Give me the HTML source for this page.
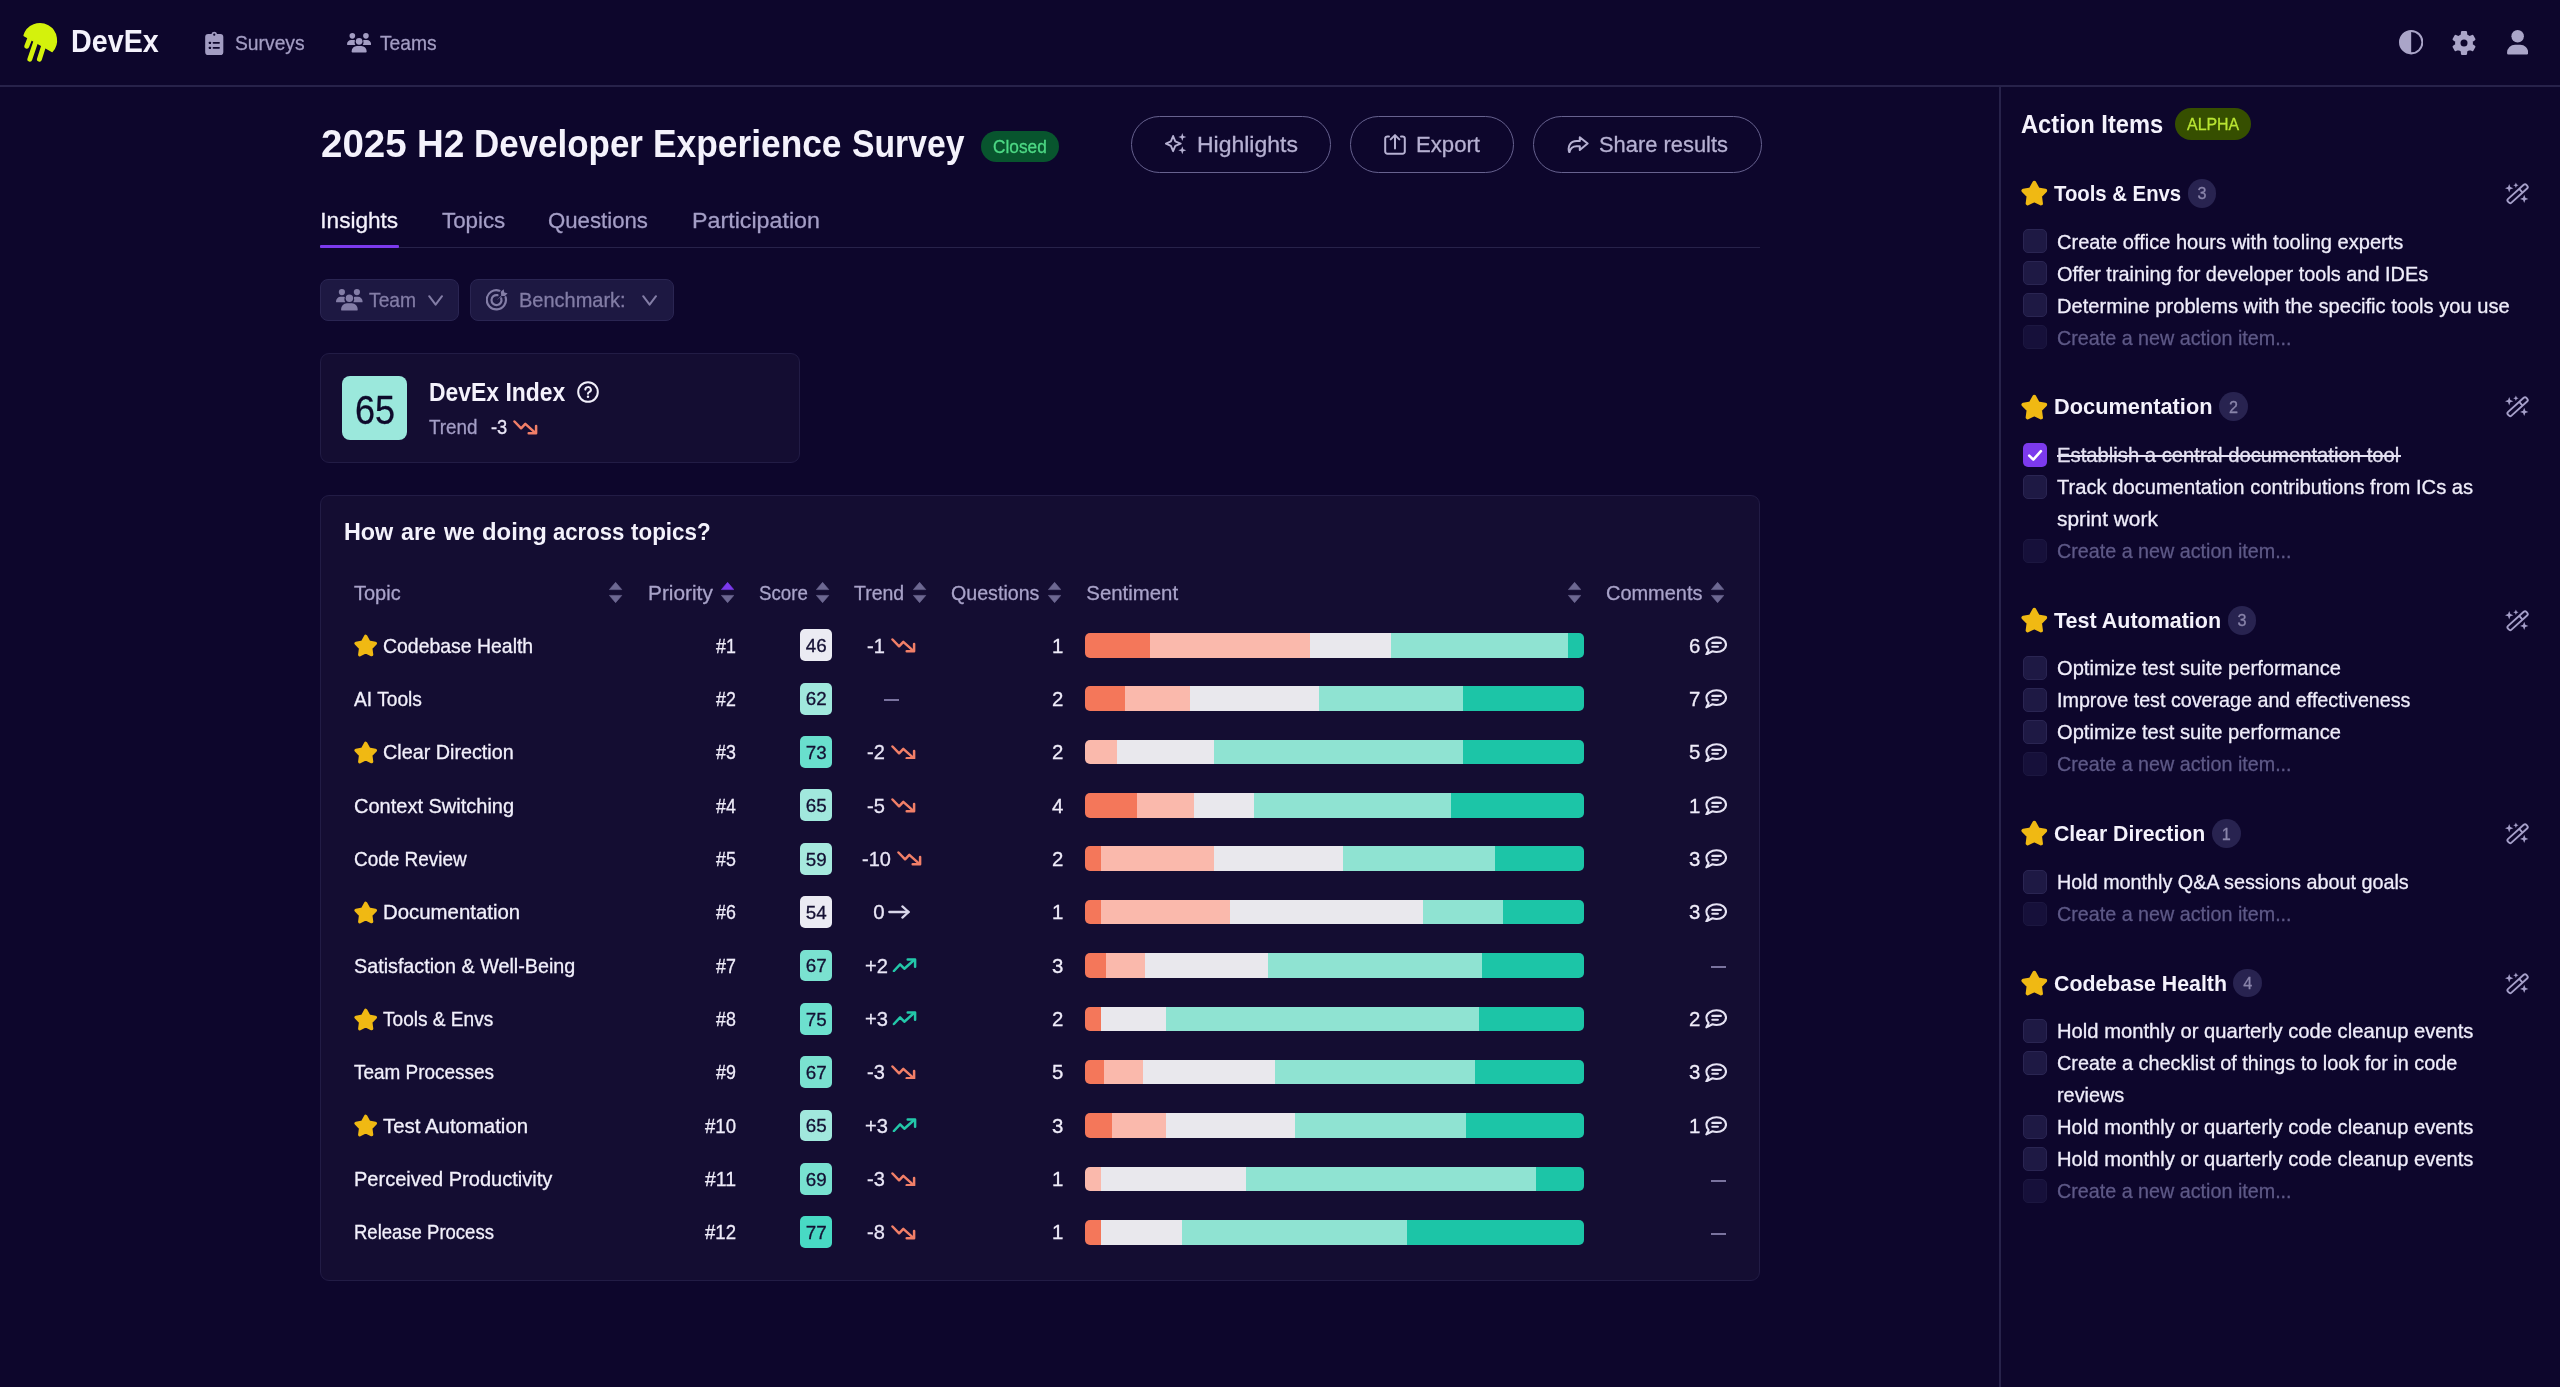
<!DOCTYPE html>
<html lang="en"><head><meta charset="utf-8"><title>DevEx - 2025 H2 Developer Experience Survey</title>
<style>
html,body{margin:0;padding:0}
body{width:2560px;height:1387px;overflow:hidden;background:#0d062c;position:relative;font-family:"Liberation Sans",sans-serif;-webkit-font-smoothing:antialiased}
.t{position:absolute;white-space:pre;display:block;transform-origin:0 0}
.b{position:absolute;display:block}
#app{position:absolute;left:0;top:0;width:2560px;height:1387px;will-change:transform}
.bar{border-radius:5px;overflow:hidden}
.bar i{position:absolute;top:0;height:100%;display:block}
</style></head>
<body>
<div id="app">
<svg class="b" style="left:0.00px;top:0.00px;" width="80.00" height="80.00" viewBox="0 0 80 80"><path fill="#d4f20c" stroke="#d4f20c" stroke-width="1.6" stroke-linejoin="round" d="M24.2 35.6 A16.4 16.4 0 1 1 52.0 51.4 Z"/><g stroke="#d4f20c" stroke-width="4.9" stroke-linecap="round"><line x1="29.6" y1="39" x2="26.8" y2="46.2"/><line x1="35.5" y1="42.5" x2="29.8" y2="59.2"/><line x1="43.3" y1="47" x2="39.4" y2="59.2"/></g></svg>
<span class="t" style="left:71.00px;top:26.44px;font-size:31.50px;line-height:31.50px;color:#f4f2fc;font-weight:700;transform:scaleX(0.9109);">DevEx</span>
<svg class="b" style="left:205.00px;top:30.60px;" width="18.50" height="24.20" viewBox="0 0 18 24"><path fill="#a39dc3" d="M3 3h3.2a2.9 2.9 0 0 1 5.6 0H15a3 3 0 0 1 3 3v15a3 3 0 0 1-3 3H3a3 3 0 0 1-3-3V6a3 3 0 0 1 3-3z"/><circle cx="9" cy="3.6" r="1.1" fill="#0d062c"/><g fill="#0d062c"><rect x="3.6" y="10.6" width="2.2" height="2.2" rx=".5"/><rect x="7.4" y="10.9" width="7.2" height="1.7" rx=".8"/><rect x="3.6" y="15.6" width="2.2" height="2.2" rx=".5"/><rect x="7.4" y="15.9" width="7.2" height="1.7" rx=".8"/></g></svg>
<span class="t" style="left:234.80px;top:32.56px;font-size:20.60px;line-height:20.60px;color:#a39dc3;-webkit-text-stroke:0.3px;transform:scaleX(0.9359);">Surveys</span>
<svg class="b" style="left:347.20px;top:33.10px;" width="24.10" height="19.60" viewBox="0 0 26.6 21.6"><g fill="#a39dc3"><circle cx="5.900" cy="3.100" r="3.100"/><circle cx="20.900" cy="3.100" r="3.100"/><path d="M0 12.400a4.600 4.600 0 0 1 4.600-4.600h2.400c.700 0 1.300.150 1.900.400a5.300 5.300 0 0 0 .300 4.900c0 .100-.300.200-.500.200H.800a.800.800 0 0 1-.800-.900z"/><path d="M26.600 12.400a4.600 4.600 0 0 0-4.600-4.600h-2.400c-.700 0-1.300.150-1.900.400a5.300 5.300 0 0 1-.300 4.900c0 .100.300.200.500.200h7.900a.800.800 0 0 0 .800-.900z"/><path stroke="#0d062c" stroke-width="1.1" paint-order="stroke" d="M5.100 20.700v-.600a5.800 5.800 0 0 1 5.800-5.800h5.000a5.800 5.800 0 0 1 5.800 5.800v.600a.900.900 0 0 1-.900.900H6.000a.900.900 0 0 1-.900-.900z"/><circle cx="13.400" cy="9.200" r="3.700" stroke="#0d062c" stroke-width="1.1" paint-order="stroke"/></g></svg>
<span class="t" style="left:379.80px;top:32.56px;font-size:20.60px;line-height:20.60px;color:#a39dc3;-webkit-text-stroke:0.3px;transform:scaleX(0.9346);">Teams</span>
<svg class="b" style="left:2398.80px;top:30.40px;" width="24.40" height="24.40" viewBox="0 0 24 24"><circle cx="12" cy="12" r="11" fill="none" stroke="#aaa5c8" stroke-width="2"/><path fill="#aaa5c8" d="M12 1a11 11 0 0 0 0 22z"/></svg>
<svg class="b" style="left:2451.90px;top:30.70px;" width="24.00" height="24.00" viewBox="0 0 24 24"><path fill="#aaa5c8" stroke="#aaa5c8" stroke-width="2.2" stroke-linejoin="round" d="M10.05 1.17 L13.95 1.17 L14.23 4.32 L17.54 6.23 L20.40 4.90 L22.35 8.27 L19.77 10.09 L19.77 13.91 L22.35 15.73 L20.40 19.10 L17.54 17.77 L14.23 19.68 L13.95 22.83 L10.05 22.83 L9.77 19.68 L6.46 17.77 L3.60 19.10 L1.65 15.73 L4.23 13.91 L4.23 10.09 L1.65 8.27 L3.60 4.90 L6.46 6.23 L9.77 4.32Z"/><circle cx="12" cy="12" r="3.5" fill="#0d062c"/></svg>
<svg class="b" style="left:2506.60px;top:30.40px;" width="21.30" height="24.50" viewBox="0 0 21 24.3"><g fill="#aaa5c8"><circle cx="10.5" cy="6.2" r="6.2"/><path d="M0 22.6a8 8 0 0 1 8-8h5a8 8 0 0 1 8 8v.4a1.3 1.3 0 0 1-1.3 1.3H1.3A1.3 1.3 0 0 1 0 23z"/></g></svg>
<div class="b" style="left:0.00px;top:85.30px;width:2560.00px;height:2.00px;background:#27224a;"></div>
<div class="b" style="left:1998.90px;top:86.00px;width:2.00px;height:1301.00px;background:#27224a;"></div>
<span class="t" style="left:320.60px;top:123.65px;font-size:39.40px;line-height:39.40px;color:#f4f2fc;font-weight:700;transform:scaleX(0.9776);">2025</span>
<span class="t" style="left:417.40px;top:123.65px;font-size:39.40px;line-height:39.40px;color:#f4f2fc;font-weight:700;transform:scaleX(0.9399);">H2</span>
<span class="t" style="left:473.60px;top:123.65px;font-size:39.40px;line-height:39.40px;color:#f4f2fc;font-weight:700;transform:scaleX(0.8871);">Developer</span>
<span class="t" style="left:653.30px;top:123.65px;font-size:39.40px;line-height:39.40px;color:#f4f2fc;font-weight:700;transform:scaleX(0.8968);">Experience</span>
<span class="t" style="left:851.60px;top:123.65px;font-size:39.40px;line-height:39.40px;color:#f4f2fc;font-weight:700;transform:scaleX(0.8554);">Survey</span>
<div class="b" style="left:981.00px;top:130.50px;width:77.80px;height:31.80px;background:#08552e;border-radius:16px;"></div>
<span class="t" style="left:993.20px;top:138.70px;font-size:17.60px;line-height:17.60px;color:#4dd985;-webkit-text-stroke:0.3px;transform:scaleX(0.9813);">Closed</span>
<div class="b" style="left:1131.00px;top:116.00px;width:200.00px;height:56.60px;border-radius:28.3px;border:1.5px solid #67628f;box-sizing:border-box;"></div>
<div class="b" style="left:1350.00px;top:116.00px;width:164.30px;height:56.60px;border-radius:28.3px;border:1.5px solid #67628f;box-sizing:border-box;"></div>
<div class="b" style="left:1533.00px;top:116.00px;width:228.50px;height:56.60px;border-radius:28.3px;border:1.5px solid #67628f;box-sizing:border-box;"></div>
<svg class="b" style="left:1165.40px;top:133.40px;" width="22.40" height="21.40" viewBox="0 0 22.4 21.4"><path fill="none" stroke="#b6b1d2" stroke-width="1.9" stroke-linejoin="round" d="M8.1 3.0 L10.3 8.4 L15.7 10.600 L10.300 12.800 L8.100 18.200 L5.900 12.800 L0.900 10.600 L5.900 8.400Z"/><path fill="#b6b1d2" d="M17.30 0.00 L18.32 2.98 L21.30 4.00 L18.32 5.02 L17.30 8.00 L16.28 5.02 L13.30 4.00 L16.28 2.98Z"/><path fill="#b6b1d2" d="M17.30 13.30 L18.32 16.28 L21.30 17.30 L18.32 18.32 L17.30 21.30 L16.28 18.32 L13.30 17.30 L16.28 16.28Z"/></svg>
<span class="t" style="left:1197.10px;top:134.14px;font-size:22.40px;line-height:22.40px;color:#b6b1d2;-webkit-text-stroke:0.3px;transform:scaleX(1.0261);">Highlights</span>
<svg class="b" style="left:1384.40px;top:134.00px;" width="22.00" height="21.00" viewBox="0 0 22 21"><g fill="none" stroke="#b6b1d2" stroke-width="2" stroke-linecap="round" stroke-linejoin="round"><path d="M5.000 2.400H3.400a2.200 2.200 0 0 0-2.200 2.200v13a2.200 2.200 0 0 0 2.200 2.200h15.200a2.200 2.200 0 0 0 2.200-2.200V4.600a2.200 2.200 0 0 0-2.200-2.200h-1.600"/><path d="M11 14.400V1.200M6.700 5.400l4.300-4.300 4.300 4.300"/></g></svg>
<span class="t" style="left:1416.20px;top:134.14px;font-size:22.40px;line-height:22.40px;color:#b6b1d2;-webkit-text-stroke:0.3px;transform:scaleX(0.9886);">Export</span>
<svg class="b" style="left:1566.80px;top:135.60px;" width="22.00" height="17.60" viewBox="0 0 22 17.6"><path fill="none" stroke="#b6b1d2" stroke-width="2" stroke-linecap="round" stroke-linejoin="round" d="M12.800 1.200 L20.600 7.600 L12.800 14.000 V10.300 H9.600 C5.800 10.300 3.300 12.300 2.400 16.400 C0.200 11.000 3.000 5.000 9.800 5.000 H12.800Z"/></svg>
<span class="t" style="left:1599.00px;top:134.14px;font-size:22.40px;line-height:22.40px;color:#b6b1d2;-webkit-text-stroke:0.3px;transform:scaleX(0.9777);">Share results</span>
<span class="t" style="left:320.30px;top:209.97px;font-size:22.60px;line-height:22.60px;color:#f4f2fc;-webkit-text-stroke:0.3px;">Insights</span>
<span class="t" style="left:442.00px;top:209.97px;font-size:22.60px;line-height:22.60px;color:#a49ec6;-webkit-text-stroke:0.3px;transform:scaleX(0.9880);">Topics</span>
<span class="t" style="left:548.30px;top:209.97px;font-size:22.60px;line-height:22.60px;color:#a49ec6;-webkit-text-stroke:0.3px;transform:scaleX(0.9822);">Questions</span>
<span class="t" style="left:692.00px;top:209.97px;font-size:22.60px;line-height:22.60px;color:#a49ec6;-webkit-text-stroke:0.3px;transform:scaleX(1.0288);">Participation</span>
<div class="b" style="left:320.00px;top:246.80px;width:1440.00px;height:1.60px;background:#27224a;"></div>
<div class="b" style="left:320.00px;top:245.00px;width:79.00px;height:3.00px;background:#7c3aed;border-radius:1px;"></div>
<div class="b" style="left:320.00px;top:279.00px;width:139.40px;height:42.20px;background:#1d1842;border-radius:8px;border:1.4px solid #2a2552;box-sizing:border-box;"></div>
<div class="b" style="left:470.00px;top:279.00px;width:204.20px;height:42.20px;background:#1d1842;border-radius:8px;border:1.4px solid #2a2552;box-sizing:border-box;"></div>
<svg class="b" style="left:336.00px;top:289.20px;" width="26.60" height="21.60" viewBox="0 0 26.6 21.6"><g fill="#837da6"><circle cx="5.900" cy="3.100" r="3.100"/><circle cx="20.900" cy="3.100" r="3.100"/><path d="M0 12.400a4.600 4.600 0 0 1 4.600-4.600h2.400c.700 0 1.300.150 1.900.400a5.300 5.300 0 0 0 .300 4.900c0 .100-.300.200-.500.200H.800a.800.800 0 0 1-.800-.900z"/><path d="M26.600 12.400a4.600 4.600 0 0 0-4.600-4.600h-2.400c-.700 0-1.300.150-1.900.400a5.300 5.300 0 0 1-.300 4.900c0 .100.300.200.500.200h7.900a.800.800 0 0 0 .800-.900z"/><path stroke="#1d1842" stroke-width="1.1" paint-order="stroke" d="M5.100 20.700v-.600a5.800 5.800 0 0 1 5.800-5.800h5.000a5.800 5.800 0 0 1 5.800 5.800v.600a.900.900 0 0 1-.900.900H6.000a.900.900 0 0 1-.900-.900z"/><circle cx="13.400" cy="9.200" r="3.700" stroke="#1d1842" stroke-width="1.1" paint-order="stroke"/></g></svg>
<span class="t" style="left:368.90px;top:290.43px;font-size:20.40px;line-height:20.40px;color:#837da6;-webkit-text-stroke:0.3px;transform:scaleX(0.9443);">Team</span>
<svg class="b" style="left:428.40px;top:294.80px;" width="15.20" height="11.00" viewBox="0 0 15.2 11"><path fill="none" stroke="#837da6" stroke-width="2" stroke-linecap="round" stroke-linejoin="round" d="M1.2 1.2 L7.6 9.6 L14 1.2"/></svg>
<svg class="b" style="left:485.60px;top:289.30px;" width="22.00" height="21.40" viewBox="0 0 22 21.4"><g fill="none" stroke="#837da6" stroke-width="2.2" stroke-linecap="round"><path d="M19.6 8.2A9.6 9.6 0 1 1 13.400 1.700"/><path d="M15.200 9.400A5 5 0 1 1 11.500 6.200"/></g><path fill="#837da6" d="M10.6 11.2 L15.2 6.400 L14.800 2.800 L17.600 0.200 L18.300 3.600 L21.600 4.200 L19.000 7.000 L15.800 6.900Z"/></svg>
<span class="t" style="left:519.20px;top:290.43px;font-size:20.40px;line-height:20.40px;color:#837da6;-webkit-text-stroke:0.3px;transform:scaleX(0.9804);">Benchmark:</span>
<svg class="b" style="left:642.00px;top:294.80px;" width="15.20" height="11.00" viewBox="0 0 15.2 11"><path fill="none" stroke="#837da6" stroke-width="2" stroke-linecap="round" stroke-linejoin="round" d="M1.2 1.2 L7.6 9.6 L14 1.2"/></svg>
<div class="b" style="left:320.00px;top:353.00px;width:480.00px;height:109.60px;background:#140d32;border-radius:9px;border:1.5px solid #221c45;box-sizing:border-box;"></div>
<div class="b" style="left:342.20px;top:376.00px;width:64.70px;height:64.20px;background:#9be8dc;border-radius:8px;"></div>
<span class="t" style="left:355.00px;top:389.52px;font-size:40.50px;line-height:40.50px;color:#0e0a2b;-webkit-text-stroke:0.3px;transform:scaleX(0.8898);">65</span>
<span class="t" style="left:429.40px;top:379.84px;font-size:25.00px;line-height:25.00px;color:#f4f2fc;font-weight:700;transform:scaleX(0.9164);">DevEx Index</span>
<svg class="b" style="left:576.70px;top:381.00px;" width="22.00" height="22.00" viewBox="0 0 22 22"><circle cx="11" cy="11" r="9.8" fill="none" stroke="#f2f0fb" stroke-width="2"/><path fill="none" stroke="#f2f0fb" stroke-width="2" stroke-linecap="round" d="M8.300 8.600a2.800 2.600 0 1 1 3.900 2.500c-.8.400-1.200.900-1.200 1.700"/><circle cx="11" cy="15.700" r="1.250" fill="#f2f0fb"/></svg>
<span class="t" style="left:429.40px;top:416.73px;font-size:20.40px;line-height:20.40px;color:#a49ec6;-webkit-text-stroke:0.3px;transform:scaleX(0.9252);">Trend</span>
<span class="t" style="left:490.60px;top:416.73px;font-size:20.40px;line-height:20.40px;color:#e9e6f6;-webkit-text-stroke:0.3px;transform:scaleX(0.8978);">-3</span>
<svg class="b" style="left:512.60px;top:420.40px;" width="25.00" height="14.60" viewBox="0 0 24 14.6"><g fill="none" stroke="#f17f68" stroke-width="2.5" stroke-linecap="round" stroke-linejoin="round"><path d="M1.0 1.5 L7.6 8.3 L11.8 3.9 L21.6 12.6"/><path d="M15.2 13.2 H22.6 V5.9"/></g></svg>
<div class="b" style="left:320.00px;top:495.00px;width:1440.00px;height:786.20px;background:#140d32;border-radius:9px;border:1.5px solid #221c45;box-sizing:border-box;"></div>
<span class="t" style="left:343.50px;top:520.11px;font-size:24.20px;line-height:24.20px;color:#f4f2fc;font-weight:700;transform:scaleX(0.9652);">How</span>
<span class="t" style="left:400.60px;top:520.11px;font-size:24.20px;line-height:24.20px;color:#f4f2fc;font-weight:700;transform:scaleX(0.9614);">are</span>
<span class="t" style="left:443.52px;top:520.11px;font-size:24.20px;line-height:24.20px;color:#f4f2fc;font-weight:700;transform:scaleX(0.9560);">we</span>
<span class="t" style="left:481.60px;top:520.11px;font-size:24.20px;line-height:24.20px;color:#f4f2fc;font-weight:700;transform:scaleX(0.9860);">doing</span>
<span class="t" style="left:553.00px;top:520.11px;font-size:24.20px;line-height:24.20px;color:#f4f2fc;font-weight:700;transform:scaleX(0.9149);">across</span>
<span class="t" style="left:631.30px;top:520.11px;font-size:24.20px;line-height:24.20px;color:#f4f2fc;font-weight:700;transform:scaleX(0.9264);">topics?</span>
<span class="t" style="left:354.40px;top:582.63px;font-size:20.40px;line-height:20.40px;color:#a9a3c9;-webkit-text-stroke:0.3px;transform:scaleX(0.9804);">Topic</span>
<span class="t" style="left:647.50px;top:582.63px;font-size:20.40px;line-height:20.40px;color:#a9a3c9;-webkit-text-stroke:0.3px;transform:scaleX(1.0214);">Priority</span>
<span class="t" style="left:758.60px;top:582.63px;font-size:20.40px;line-height:20.40px;color:#a9a3c9;-webkit-text-stroke:0.3px;transform:scaleX(0.9165);">Score</span>
<span class="t" style="left:853.90px;top:582.63px;font-size:20.40px;line-height:20.40px;color:#a9a3c9;-webkit-text-stroke:0.3px;transform:scaleX(0.9556);">Trend</span>
<span class="t" style="left:951.00px;top:582.63px;font-size:20.40px;line-height:20.40px;color:#a9a3c9;-webkit-text-stroke:0.3px;transform:scaleX(0.9630);">Questions</span>
<span class="t" style="left:1086.30px;top:582.63px;font-size:20.40px;line-height:20.40px;color:#a9a3c9;-webkit-text-stroke:0.3px;">Sentiment</span>
<span class="t" style="left:1605.80px;top:582.63px;font-size:20.40px;line-height:20.40px;color:#a9a3c9;-webkit-text-stroke:0.3px;transform:scaleX(0.9784);">Comments</span>
<svg class="b" style="left:609.40px;top:581.80px;" width="13.20" height="21.00" viewBox="0 0 13.2 21"><path fill="#6d6892" d="M6.6 0.3 L12.8 7.6 H0.4Z" stroke="#6d6892" stroke-width=".6" stroke-linejoin="round"/><path fill="#6d6892" d="M6.6 20.7 L12.8 13.4 H0.4Z" stroke="#6d6892" stroke-width=".6" stroke-linejoin="round"/></svg>
<svg class="b" style="left:721.20px;top:581.80px;" width="13.20" height="21.00" viewBox="0 0 13.2 21"><path fill="#7c3aed" d="M6.6 0.3 L12.8 7.6 H0.4Z" stroke="#7c3aed" stroke-width=".6" stroke-linejoin="round"/><path fill="#6d6892" d="M6.6 20.7 L12.8 13.4 H0.4Z" stroke="#6d6892" stroke-width=".6" stroke-linejoin="round"/></svg>
<svg class="b" style="left:816.40px;top:581.80px;" width="13.20" height="21.00" viewBox="0 0 13.2 21"><path fill="#6d6892" d="M6.6 0.3 L12.8 7.6 H0.4Z" stroke="#6d6892" stroke-width=".6" stroke-linejoin="round"/><path fill="#6d6892" d="M6.6 20.7 L12.8 13.4 H0.4Z" stroke="#6d6892" stroke-width=".6" stroke-linejoin="round"/></svg>
<svg class="b" style="left:913.40px;top:581.80px;" width="13.20" height="21.00" viewBox="0 0 13.2 21"><path fill="#6d6892" d="M6.6 0.3 L12.8 7.6 H0.4Z" stroke="#6d6892" stroke-width=".6" stroke-linejoin="round"/><path fill="#6d6892" d="M6.6 20.7 L12.8 13.4 H0.4Z" stroke="#6d6892" stroke-width=".6" stroke-linejoin="round"/></svg>
<svg class="b" style="left:1047.90px;top:581.80px;" width="13.20" height="21.00" viewBox="0 0 13.2 21"><path fill="#6d6892" d="M6.6 0.3 L12.8 7.6 H0.4Z" stroke="#6d6892" stroke-width=".6" stroke-linejoin="round"/><path fill="#6d6892" d="M6.6 20.7 L12.8 13.4 H0.4Z" stroke="#6d6892" stroke-width=".6" stroke-linejoin="round"/></svg>
<svg class="b" style="left:1568.00px;top:581.80px;" width="13.20" height="21.00" viewBox="0 0 13.2 21"><path fill="#6d6892" d="M6.6 0.3 L12.8 7.6 H0.4Z" stroke="#6d6892" stroke-width=".6" stroke-linejoin="round"/><path fill="#6d6892" d="M6.6 20.7 L12.8 13.4 H0.4Z" stroke="#6d6892" stroke-width=".6" stroke-linejoin="round"/></svg>
<svg class="b" style="left:1710.90px;top:581.80px;" width="13.20" height="21.00" viewBox="0 0 13.2 21"><path fill="#6d6892" d="M6.6 0.3 L12.8 7.6 H0.4Z" stroke="#6d6892" stroke-width=".6" stroke-linejoin="round"/><path fill="#6d6892" d="M6.6 20.7 L12.8 13.4 H0.4Z" stroke="#6d6892" stroke-width=".6" stroke-linejoin="round"/></svg>
<svg class="b" style="left:353.60px;top:634.20px;" width="23.40" height="23.40" viewBox="0 0 24 24"><path d="M12.00 2.40 L15.23 8.35 L21.89 9.59 L17.23 14.50 L18.11 21.21 L12.00 18.30 L5.89 21.21 L6.77 14.50 L2.11 9.59 L8.77 8.35Z" fill="#f0b913" stroke="#f0b913" stroke-width="3.4" stroke-linejoin="round"/></svg>
<span class="t" style="left:383.00px;top:635.53px;font-size:20.40px;line-height:20.40px;color:#f2f0fb;-webkit-text-stroke:0.3px;transform:scaleX(0.9531);">Codebase Health</span>
<span class="t" style="left:716.20px;top:635.53px;font-size:20.40px;line-height:20.40px;color:#efecf9;-webkit-text-stroke:0.3px;transform:scaleX(0.8744);">#1</span>
<div class="b" style="left:800.20px;top:629.40px;width:31.80px;height:31.80px;background:#ebebf3;border-radius:5px;"></div>
<span class="t" style="left:805.73px;top:637.09px;font-size:18.80px;line-height:18.80px;color:#141033;-webkit-text-stroke:0.3px;">46</span>
<span class="t" style="left:867.17px;top:635.53px;font-size:20.40px;line-height:20.40px;color:#e9e6f6;-webkit-text-stroke:0.3px;transform:scaleX(0.9835);">-1</span>
<svg class="b" style="left:891.23px;top:638.00px;" width="25.00" height="14.60" viewBox="0 0 24 14.6"><g fill="none" stroke="#f17f68" stroke-width="2.5" stroke-linecap="round" stroke-linejoin="round"><path d="M1.0 1.5 L7.6 8.3 L11.8 3.9 L21.6 12.6"/><path d="M15.2 13.2 H22.6 V5.9"/></g></svg>
<span class="t" style="left:1051.98px;top:635.53px;font-size:20.40px;line-height:20.40px;color:#efecf9;-webkit-text-stroke:0.3px;">1</span>
<div class="b bar" style="left:1085.4px;top:633.00px;width:498.6px;height:24.6px"><i style="left:0.0px;width:65.0px;background:#f4775a"></i><i style="left:64.6px;width:160.8px;background:#fab9ac"></i><i style="left:225.0px;width:80.6px;background:#e9e8ed"></i><i style="left:305.2px;width:177.8px;background:#8fe3d2"></i><i style="left:482.6px;width:16.4px;background:#1cc5a7"></i></div>
<span class="t" style="left:1688.88px;top:635.53px;font-size:20.40px;line-height:20.40px;color:#efecf9;-webkit-text-stroke:0.3px;">6</span>
<svg class="b" style="left:1704.60px;top:635.80px;" width="22.40" height="19.60" viewBox="0 0 22.4 19.6"><g fill="none" stroke="#e6e3f4" stroke-width="2.1" stroke-linecap="round" stroke-linejoin="round"><path d="M11.6 1.2c5.4 0 9.4 3.3 9.4 7.4s-4 7.4-9.4 7.4c-1.5 0-2.9-.3-4.100-.7L1.300 18.400l2.300-4.300C2.100 12.700 1.400 10.700 1.400 8.600 1.400 4.500 6.200 1.200 11.600 1.200z"/><path d="M7.300 6.900h8.600M7.300 10.700h5.600"/></g></svg>
<span class="t" style="left:354.20px;top:688.89px;font-size:20.40px;line-height:20.40px;color:#f2f0fb;-webkit-text-stroke:0.3px;transform:scaleX(0.9416);">AI Tools</span>
<span class="t" style="left:716.20px;top:688.89px;font-size:20.40px;line-height:20.40px;color:#efecf9;-webkit-text-stroke:0.3px;transform:scaleX(0.8744);">#2</span>
<div class="b" style="left:800.20px;top:682.76px;width:31.80px;height:31.80px;background:#a0e8dd;border-radius:5px;"></div>
<span class="t" style="left:805.73px;top:690.45px;font-size:18.80px;line-height:18.80px;color:#141033;-webkit-text-stroke:0.3px;">62</span>
<div class="b" style="left:884.00px;top:699.00px;width:15.40px;height:2.20px;background:#7a739f;"></div>
<span class="t" style="left:1051.98px;top:688.89px;font-size:20.40px;line-height:20.40px;color:#efecf9;-webkit-text-stroke:0.3px;">2</span>
<div class="b bar" style="left:1085.4px;top:686.36px;width:498.6px;height:24.6px"><i style="left:0.0px;width:40.0px;background:#f4775a"></i><i style="left:39.6px;width:65.0px;background:#fab9ac"></i><i style="left:104.2px;width:129.4px;background:#e9e8ed"></i><i style="left:233.2px;width:145.2px;background:#8fe3d2"></i><i style="left:378.0px;width:121.0px;background:#1cc5a7"></i></div>
<span class="t" style="left:1688.88px;top:688.89px;font-size:20.40px;line-height:20.40px;color:#efecf9;-webkit-text-stroke:0.3px;">7</span>
<svg class="b" style="left:1704.60px;top:689.16px;" width="22.40" height="19.60" viewBox="0 0 22.4 19.6"><g fill="none" stroke="#e6e3f4" stroke-width="2.1" stroke-linecap="round" stroke-linejoin="round"><path d="M11.6 1.2c5.4 0 9.4 3.3 9.4 7.4s-4 7.4-9.4 7.4c-1.5 0-2.9-.3-4.100-.7L1.300 18.400l2.300-4.300C2.100 12.700 1.400 10.700 1.400 8.600 1.400 4.500 6.200 1.200 11.600 1.200z"/><path d="M7.300 6.900h8.600M7.300 10.700h5.600"/></g></svg>
<svg class="b" style="left:353.60px;top:740.92px;" width="23.40" height="23.40" viewBox="0 0 24 24"><path d="M12.00 2.40 L15.23 8.35 L21.89 9.59 L17.23 14.50 L18.11 21.21 L12.00 18.30 L5.89 21.21 L6.77 14.50 L2.11 9.59 L8.77 8.35Z" fill="#f0b913" stroke="#f0b913" stroke-width="3.4" stroke-linejoin="round"/></svg>
<span class="t" style="left:383.00px;top:742.25px;font-size:20.40px;line-height:20.40px;color:#f2f0fb;-webkit-text-stroke:0.3px;transform:scaleX(0.9693);">Clear Direction</span>
<span class="t" style="left:716.20px;top:742.25px;font-size:20.40px;line-height:20.40px;color:#efecf9;-webkit-text-stroke:0.3px;transform:scaleX(0.8744);">#3</span>
<div class="b" style="left:800.20px;top:736.12px;width:31.80px;height:31.80px;background:#69dfcd;border-radius:5px;"></div>
<span class="t" style="left:805.73px;top:743.81px;font-size:18.80px;line-height:18.80px;color:#141033;-webkit-text-stroke:0.3px;">73</span>
<span class="t" style="left:867.17px;top:742.25px;font-size:20.40px;line-height:20.40px;color:#e9e6f6;-webkit-text-stroke:0.3px;transform:scaleX(0.9835);">-2</span>
<svg class="b" style="left:891.23px;top:744.72px;" width="25.00" height="14.60" viewBox="0 0 24 14.6"><g fill="none" stroke="#f17f68" stroke-width="2.5" stroke-linecap="round" stroke-linejoin="round"><path d="M1.0 1.5 L7.6 8.3 L11.8 3.9 L21.6 12.6"/><path d="M15.2 13.2 H22.6 V5.9"/></g></svg>
<span class="t" style="left:1051.98px;top:742.25px;font-size:20.40px;line-height:20.40px;color:#efecf9;-webkit-text-stroke:0.3px;">2</span>
<div class="b bar" style="left:1085.4px;top:739.72px;width:498.6px;height:24.6px"><i style="left:0.0px;width:32.4px;background:#fab9ac"></i><i style="left:32.0px;width:97.0px;background:#e9e8ed"></i><i style="left:128.6px;width:249.8px;background:#8fe3d2"></i><i style="left:378.0px;width:121.0px;background:#1cc5a7"></i></div>
<span class="t" style="left:1688.88px;top:742.25px;font-size:20.40px;line-height:20.40px;color:#efecf9;-webkit-text-stroke:0.3px;">5</span>
<svg class="b" style="left:1704.60px;top:742.52px;" width="22.40" height="19.60" viewBox="0 0 22.4 19.6"><g fill="none" stroke="#e6e3f4" stroke-width="2.1" stroke-linecap="round" stroke-linejoin="round"><path d="M11.6 1.2c5.4 0 9.4 3.3 9.4 7.4s-4 7.4-9.4 7.4c-1.5 0-2.9-.3-4.100-.7L1.300 18.400l2.300-4.300C2.100 12.700 1.400 10.700 1.400 8.600 1.400 4.500 6.200 1.200 11.600 1.200z"/><path d="M7.300 6.900h8.600M7.300 10.700h5.600"/></g></svg>
<span class="t" style="left:354.20px;top:795.61px;font-size:20.40px;line-height:20.40px;color:#f2f0fb;-webkit-text-stroke:0.3px;transform:scaleX(0.9810);">Context Switching</span>
<span class="t" style="left:716.20px;top:795.61px;font-size:20.40px;line-height:20.40px;color:#efecf9;-webkit-text-stroke:0.3px;transform:scaleX(0.8744);">#4</span>
<div class="b" style="left:800.20px;top:789.48px;width:31.80px;height:31.80px;background:#a1e8dd;border-radius:5px;"></div>
<span class="t" style="left:805.73px;top:797.17px;font-size:18.80px;line-height:18.80px;color:#141033;-webkit-text-stroke:0.3px;">65</span>
<span class="t" style="left:867.17px;top:795.61px;font-size:20.40px;line-height:20.40px;color:#e9e6f6;-webkit-text-stroke:0.3px;transform:scaleX(0.9835);">-5</span>
<svg class="b" style="left:891.23px;top:798.08px;" width="25.00" height="14.60" viewBox="0 0 24 14.6"><g fill="none" stroke="#f17f68" stroke-width="2.5" stroke-linecap="round" stroke-linejoin="round"><path d="M1.0 1.5 L7.6 8.3 L11.8 3.9 L21.6 12.6"/><path d="M15.2 13.2 H22.6 V5.9"/></g></svg>
<span class="t" style="left:1051.98px;top:795.61px;font-size:20.40px;line-height:20.40px;color:#efecf9;-webkit-text-stroke:0.3px;">4</span>
<div class="b bar" style="left:1085.4px;top:793.08px;width:498.6px;height:24.6px"><i style="left:0.0px;width:52.4px;background:#f4775a"></i><i style="left:52.0px;width:57.0px;background:#fab9ac"></i><i style="left:108.6px;width:60.4px;background:#e9e8ed"></i><i style="left:168.6px;width:197.8px;background:#8fe3d2"></i><i style="left:366.0px;width:133.0px;background:#1cc5a7"></i></div>
<span class="t" style="left:1688.88px;top:795.61px;font-size:20.40px;line-height:20.40px;color:#efecf9;-webkit-text-stroke:0.3px;">1</span>
<svg class="b" style="left:1704.60px;top:795.88px;" width="22.40" height="19.60" viewBox="0 0 22.4 19.6"><g fill="none" stroke="#e6e3f4" stroke-width="2.1" stroke-linecap="round" stroke-linejoin="round"><path d="M11.6 1.2c5.4 0 9.4 3.3 9.4 7.4s-4 7.4-9.4 7.4c-1.5 0-2.9-.3-4.100-.7L1.300 18.400l2.300-4.300C2.100 12.700 1.400 10.700 1.400 8.600 1.400 4.500 6.200 1.200 11.600 1.200z"/><path d="M7.300 6.900h8.600M7.300 10.700h5.600"/></g></svg>
<span class="t" style="left:354.20px;top:848.97px;font-size:20.40px;line-height:20.40px;color:#f2f0fb;-webkit-text-stroke:0.3px;transform:scaleX(0.9293);">Code Review</span>
<span class="t" style="left:716.20px;top:848.97px;font-size:20.40px;line-height:20.40px;color:#efecf9;-webkit-text-stroke:0.3px;transform:scaleX(0.8744);">#5</span>
<div class="b" style="left:800.20px;top:842.84px;width:31.80px;height:31.80px;background:#a6e9de;border-radius:5px;"></div>
<span class="t" style="left:805.73px;top:850.53px;font-size:18.80px;line-height:18.80px;color:#141033;-webkit-text-stroke:0.3px;">59</span>
<span class="t" style="left:861.66px;top:848.97px;font-size:20.40px;line-height:20.40px;color:#e9e6f6;-webkit-text-stroke:0.3px;transform:scaleX(0.9796);">-10</span>
<svg class="b" style="left:896.74px;top:851.44px;" width="25.00" height="14.60" viewBox="0 0 24 14.6"><g fill="none" stroke="#f17f68" stroke-width="2.5" stroke-linecap="round" stroke-linejoin="round"><path d="M1.0 1.5 L7.6 8.3 L11.8 3.9 L21.6 12.6"/><path d="M15.2 13.2 H22.6 V5.9"/></g></svg>
<span class="t" style="left:1051.98px;top:848.97px;font-size:20.40px;line-height:20.40px;color:#efecf9;-webkit-text-stroke:0.3px;">2</span>
<div class="b bar" style="left:1085.4px;top:846.44px;width:498.6px;height:24.6px"><i style="left:0.0px;width:16.0px;background:#f4775a"></i><i style="left:15.6px;width:113.4px;background:#fab9ac"></i><i style="left:128.6px;width:129.0px;background:#e9e8ed"></i><i style="left:257.2px;width:153.2px;background:#8fe3d2"></i><i style="left:410.0px;width:89.0px;background:#1cc5a7"></i></div>
<span class="t" style="left:1688.88px;top:848.97px;font-size:20.40px;line-height:20.40px;color:#efecf9;-webkit-text-stroke:0.3px;">3</span>
<svg class="b" style="left:1704.60px;top:849.24px;" width="22.40" height="19.60" viewBox="0 0 22.4 19.6"><g fill="none" stroke="#e6e3f4" stroke-width="2.1" stroke-linecap="round" stroke-linejoin="round"><path d="M11.6 1.2c5.4 0 9.4 3.3 9.4 7.4s-4 7.4-9.4 7.4c-1.5 0-2.9-.3-4.100-.7L1.300 18.400l2.300-4.300C2.100 12.700 1.400 10.700 1.400 8.600 1.400 4.500 6.200 1.200 11.600 1.200z"/><path d="M7.300 6.900h8.600M7.300 10.700h5.600"/></g></svg>
<svg class="b" style="left:353.60px;top:901.00px;" width="23.40" height="23.40" viewBox="0 0 24 24"><path d="M12.00 2.40 L15.23 8.35 L21.89 9.59 L17.23 14.50 L18.11 21.21 L12.00 18.30 L5.89 21.21 L6.77 14.50 L2.11 9.59 L8.77 8.35Z" fill="#f0b913" stroke="#f0b913" stroke-width="3.4" stroke-linejoin="round"/></svg>
<span class="t" style="left:383.00px;top:902.33px;font-size:20.40px;line-height:20.40px;color:#f2f0fb;-webkit-text-stroke:0.3px;">Documentation</span>
<span class="t" style="left:716.20px;top:902.33px;font-size:20.40px;line-height:20.40px;color:#efecf9;-webkit-text-stroke:0.3px;transform:scaleX(0.8744);">#6</span>
<div class="b" style="left:800.20px;top:896.20px;width:31.80px;height:31.80px;background:#ebebf3;border-radius:5px;"></div>
<span class="t" style="left:805.73px;top:903.89px;font-size:18.80px;line-height:18.80px;color:#141033;-webkit-text-stroke:0.3px;">54</span>
<span class="t" style="left:873.20px;top:902.33px;font-size:20.40px;line-height:20.40px;color:#e9e6f6;-webkit-text-stroke:0.3px;">0</span>
<svg class="b" style="left:888.00px;top:905.40px;" width="22.00" height="14.00" viewBox="0 0 22 14"><g fill="none" stroke="#d9d6ea" stroke-width="2.3" stroke-linecap="round" stroke-linejoin="round"><path d="M1.3 7 H20.5"/><path d="M14.4 1.4 L20.6 7 L14.4 12.6"/></g></svg>
<span class="t" style="left:1051.98px;top:902.33px;font-size:20.40px;line-height:20.40px;color:#efecf9;-webkit-text-stroke:0.3px;">1</span>
<div class="b bar" style="left:1085.4px;top:899.80px;width:498.6px;height:24.6px"><i style="left:0.0px;width:16.0px;background:#f4775a"></i><i style="left:15.6px;width:129.4px;background:#fab9ac"></i><i style="left:144.6px;width:193.4px;background:#e9e8ed"></i><i style="left:337.6px;width:80.4px;background:#8fe3d2"></i><i style="left:417.6px;width:81.4px;background:#1cc5a7"></i></div>
<span class="t" style="left:1688.88px;top:902.33px;font-size:20.40px;line-height:20.40px;color:#efecf9;-webkit-text-stroke:0.3px;">3</span>
<svg class="b" style="left:1704.60px;top:902.60px;" width="22.40" height="19.60" viewBox="0 0 22.4 19.6"><g fill="none" stroke="#e6e3f4" stroke-width="2.1" stroke-linecap="round" stroke-linejoin="round"><path d="M11.6 1.2c5.4 0 9.4 3.3 9.4 7.4s-4 7.4-9.4 7.4c-1.5 0-2.9-.3-4.100-.7L1.300 18.400l2.300-4.300C2.100 12.700 1.400 10.700 1.400 8.600 1.400 4.500 6.200 1.200 11.600 1.200z"/><path d="M7.300 6.900h8.600M7.300 10.700h5.600"/></g></svg>
<span class="t" style="left:354.20px;top:955.69px;font-size:20.40px;line-height:20.40px;color:#f2f0fb;-webkit-text-stroke:0.3px;transform:scaleX(0.9681);">Satisfaction &amp; Well-Being</span>
<span class="t" style="left:716.20px;top:955.69px;font-size:20.40px;line-height:20.40px;color:#efecf9;-webkit-text-stroke:0.3px;transform:scaleX(0.8744);">#7</span>
<div class="b" style="left:800.20px;top:949.56px;width:31.80px;height:31.80px;background:#7ae1d0;border-radius:5px;"></div>
<span class="t" style="left:805.73px;top:957.25px;font-size:18.80px;line-height:18.80px;color:#141033;-webkit-text-stroke:0.3px;">67</span>
<span class="t" style="left:864.62px;top:955.69px;font-size:20.40px;line-height:20.40px;color:#e9e6f6;-webkit-text-stroke:0.3px;transform:scaleX(0.9871);">+2</span>
<svg class="b" style="left:892.18px;top:957.76px;" width="25.00" height="14.60" viewBox="0 0 24 14.6"><g fill="none" stroke="#23c7a9" stroke-width="2.5" stroke-linecap="round" stroke-linejoin="round"><path d="M1.4 13 L7.6 6.4 L11.8 10.7 L21.6 2"/><path d="M15.2 1.4 H22.6 V8.7"/></g></svg>
<span class="t" style="left:1051.98px;top:955.69px;font-size:20.40px;line-height:20.40px;color:#efecf9;-webkit-text-stroke:0.3px;">3</span>
<div class="b bar" style="left:1085.4px;top:953.16px;width:498.6px;height:24.6px"><i style="left:0.0px;width:21.4px;background:#f4775a"></i><i style="left:21.0px;width:38.6px;background:#fab9ac"></i><i style="left:59.2px;width:123.8px;background:#e9e8ed"></i><i style="left:182.6px;width:214.4px;background:#8fe3d2"></i><i style="left:396.6px;width:102.4px;background:#1cc5a7"></i></div>
<div class="b" style="left:1710.60px;top:966.20px;width:15.60px;height:2.20px;background:#7a739f;"></div>
<svg class="b" style="left:353.60px;top:1007.72px;" width="23.40" height="23.40" viewBox="0 0 24 24"><path d="M12.00 2.40 L15.23 8.35 L21.89 9.59 L17.23 14.50 L18.11 21.21 L12.00 18.30 L5.89 21.21 L6.77 14.50 L2.11 9.59 L8.77 8.35Z" fill="#f0b913" stroke="#f0b913" stroke-width="3.4" stroke-linejoin="round"/></svg>
<span class="t" style="left:383.00px;top:1009.05px;font-size:20.40px;line-height:20.40px;color:#f2f0fb;-webkit-text-stroke:0.3px;transform:scaleX(0.9354);">Tools &amp; Envs</span>
<span class="t" style="left:716.20px;top:1009.05px;font-size:20.40px;line-height:20.40px;color:#efecf9;-webkit-text-stroke:0.3px;transform:scaleX(0.8744);">#8</span>
<div class="b" style="left:800.20px;top:1002.92px;width:31.80px;height:31.80px;background:#6de0ce;border-radius:5px;"></div>
<span class="t" style="left:805.73px;top:1010.61px;font-size:18.80px;line-height:18.80px;color:#141033;-webkit-text-stroke:0.3px;">75</span>
<span class="t" style="left:864.62px;top:1009.05px;font-size:20.40px;line-height:20.40px;color:#e9e6f6;-webkit-text-stroke:0.3px;transform:scaleX(0.9871);">+3</span>
<svg class="b" style="left:892.18px;top:1011.12px;" width="25.00" height="14.60" viewBox="0 0 24 14.6"><g fill="none" stroke="#23c7a9" stroke-width="2.5" stroke-linecap="round" stroke-linejoin="round"><path d="M1.4 13 L7.6 6.4 L11.8 10.7 L21.6 2"/><path d="M15.2 1.4 H22.6 V8.7"/></g></svg>
<span class="t" style="left:1051.98px;top:1009.05px;font-size:20.40px;line-height:20.40px;color:#efecf9;-webkit-text-stroke:0.3px;">2</span>
<div class="b bar" style="left:1085.4px;top:1006.52px;width:498.6px;height:24.6px"><i style="left:0.0px;width:16.0px;background:#f4775a"></i><i style="left:15.6px;width:65.4px;background:#e9e8ed"></i><i style="left:80.6px;width:313.8px;background:#8fe3d2"></i><i style="left:394.0px;width:105.0px;background:#1cc5a7"></i></div>
<span class="t" style="left:1688.88px;top:1009.05px;font-size:20.40px;line-height:20.40px;color:#efecf9;-webkit-text-stroke:0.3px;">2</span>
<svg class="b" style="left:1704.60px;top:1009.32px;" width="22.40" height="19.60" viewBox="0 0 22.4 19.6"><g fill="none" stroke="#e6e3f4" stroke-width="2.1" stroke-linecap="round" stroke-linejoin="round"><path d="M11.6 1.2c5.4 0 9.4 3.3 9.4 7.4s-4 7.4-9.4 7.4c-1.5 0-2.9-.3-4.100-.7L1.300 18.400l2.300-4.300C2.100 12.700 1.400 10.700 1.400 8.600 1.400 4.500 6.200 1.200 11.600 1.200z"/><path d="M7.300 6.900h8.600M7.300 10.700h5.600"/></g></svg>
<span class="t" style="left:354.20px;top:1062.41px;font-size:20.40px;line-height:20.40px;color:#f2f0fb;-webkit-text-stroke:0.3px;transform:scaleX(0.9287);">Team Processes</span>
<span class="t" style="left:716.20px;top:1062.41px;font-size:20.40px;line-height:20.40px;color:#efecf9;-webkit-text-stroke:0.3px;transform:scaleX(0.8744);">#9</span>
<div class="b" style="left:800.20px;top:1056.28px;width:31.80px;height:31.80px;background:#7ae1d0;border-radius:5px;"></div>
<span class="t" style="left:805.73px;top:1063.97px;font-size:18.80px;line-height:18.80px;color:#141033;-webkit-text-stroke:0.3px;">67</span>
<span class="t" style="left:867.17px;top:1062.41px;font-size:20.40px;line-height:20.40px;color:#e9e6f6;-webkit-text-stroke:0.3px;transform:scaleX(0.9835);">-3</span>
<svg class="b" style="left:891.23px;top:1064.88px;" width="25.00" height="14.60" viewBox="0 0 24 14.6"><g fill="none" stroke="#f17f68" stroke-width="2.5" stroke-linecap="round" stroke-linejoin="round"><path d="M1.0 1.5 L7.6 8.3 L11.8 3.9 L21.6 12.6"/><path d="M15.2 13.2 H22.6 V5.9"/></g></svg>
<span class="t" style="left:1051.98px;top:1062.41px;font-size:20.40px;line-height:20.40px;color:#efecf9;-webkit-text-stroke:0.3px;">5</span>
<div class="b bar" style="left:1085.4px;top:1059.88px;width:498.6px;height:24.6px"><i style="left:0.0px;width:19.4px;background:#f4775a"></i><i style="left:19.0px;width:39.0px;background:#fab9ac"></i><i style="left:57.6px;width:132.8px;background:#e9e8ed"></i><i style="left:190.0px;width:199.6px;background:#8fe3d2"></i><i style="left:389.2px;width:109.8px;background:#1cc5a7"></i></div>
<span class="t" style="left:1688.88px;top:1062.41px;font-size:20.40px;line-height:20.40px;color:#efecf9;-webkit-text-stroke:0.3px;">3</span>
<svg class="b" style="left:1704.60px;top:1062.68px;" width="22.40" height="19.60" viewBox="0 0 22.4 19.6"><g fill="none" stroke="#e6e3f4" stroke-width="2.1" stroke-linecap="round" stroke-linejoin="round"><path d="M11.6 1.2c5.4 0 9.4 3.3 9.4 7.4s-4 7.4-9.4 7.4c-1.5 0-2.9-.3-4.100-.7L1.300 18.400l2.300-4.300C2.100 12.700 1.400 10.700 1.400 8.600 1.400 4.500 6.200 1.200 11.600 1.200z"/><path d="M7.300 6.900h8.600M7.300 10.700h5.600"/></g></svg>
<svg class="b" style="left:353.60px;top:1114.44px;" width="23.40" height="23.40" viewBox="0 0 24 24"><path d="M12.00 2.40 L15.23 8.35 L21.89 9.59 L17.23 14.50 L18.11 21.21 L12.00 18.30 L5.89 21.21 L6.77 14.50 L2.11 9.59 L8.77 8.35Z" fill="#f0b913" stroke="#f0b913" stroke-width="3.4" stroke-linejoin="round"/></svg>
<span class="t" style="left:383.00px;top:1115.77px;font-size:20.40px;line-height:20.40px;color:#f2f0fb;-webkit-text-stroke:0.3px;">Test Automation</span>
<span class="t" style="left:705.00px;top:1115.77px;font-size:20.40px;line-height:20.40px;color:#efecf9;-webkit-text-stroke:0.3px;transform:scaleX(0.9099);">#10</span>
<div class="b" style="left:800.20px;top:1109.64px;width:31.80px;height:31.80px;background:#a1e8dd;border-radius:5px;"></div>
<span class="t" style="left:805.73px;top:1117.33px;font-size:18.80px;line-height:18.80px;color:#141033;-webkit-text-stroke:0.3px;">65</span>
<span class="t" style="left:864.62px;top:1115.77px;font-size:20.40px;line-height:20.40px;color:#e9e6f6;-webkit-text-stroke:0.3px;transform:scaleX(0.9871);">+3</span>
<svg class="b" style="left:892.18px;top:1117.84px;" width="25.00" height="14.60" viewBox="0 0 24 14.6"><g fill="none" stroke="#23c7a9" stroke-width="2.5" stroke-linecap="round" stroke-linejoin="round"><path d="M1.4 13 L7.6 6.4 L11.8 10.7 L21.6 2"/><path d="M15.2 1.4 H22.6 V8.7"/></g></svg>
<span class="t" style="left:1051.98px;top:1115.77px;font-size:20.40px;line-height:20.40px;color:#efecf9;-webkit-text-stroke:0.3px;">3</span>
<div class="b bar" style="left:1085.4px;top:1113.24px;width:498.6px;height:24.6px"><i style="left:0.0px;width:26.6px;background:#f4775a"></i><i style="left:26.2px;width:54.8px;background:#fab9ac"></i><i style="left:80.6px;width:129.0px;background:#e9e8ed"></i><i style="left:209.2px;width:171.8px;background:#8fe3d2"></i><i style="left:380.6px;width:118.4px;background:#1cc5a7"></i></div>
<span class="t" style="left:1688.88px;top:1115.77px;font-size:20.40px;line-height:20.40px;color:#efecf9;-webkit-text-stroke:0.3px;">1</span>
<svg class="b" style="left:1704.60px;top:1116.04px;" width="22.40" height="19.60" viewBox="0 0 22.4 19.6"><g fill="none" stroke="#e6e3f4" stroke-width="2.1" stroke-linecap="round" stroke-linejoin="round"><path d="M11.6 1.2c5.4 0 9.4 3.3 9.4 7.4s-4 7.4-9.4 7.4c-1.5 0-2.9-.3-4.100-.7L1.300 18.400l2.300-4.300C2.100 12.700 1.400 10.700 1.400 8.600 1.400 4.500 6.200 1.200 11.600 1.200z"/><path d="M7.300 6.900h8.600M7.300 10.700h5.600"/></g></svg>
<span class="t" style="left:354.20px;top:1169.13px;font-size:20.40px;line-height:20.40px;color:#f2f0fb;-webkit-text-stroke:0.3px;transform:scaleX(0.9829);">Perceived Productivity</span>
<span class="t" style="left:705.00px;top:1169.13px;font-size:20.40px;line-height:20.40px;color:#efecf9;-webkit-text-stroke:0.3px;transform:scaleX(0.9527);">#11</span>
<div class="b" style="left:800.20px;top:1163.00px;width:31.80px;height:31.80px;background:#78e1d0;border-radius:5px;"></div>
<span class="t" style="left:805.73px;top:1170.69px;font-size:18.80px;line-height:18.80px;color:#141033;-webkit-text-stroke:0.3px;">69</span>
<span class="t" style="left:867.17px;top:1169.13px;font-size:20.40px;line-height:20.40px;color:#e9e6f6;-webkit-text-stroke:0.3px;transform:scaleX(0.9835);">-3</span>
<svg class="b" style="left:891.23px;top:1171.60px;" width="25.00" height="14.60" viewBox="0 0 24 14.6"><g fill="none" stroke="#f17f68" stroke-width="2.5" stroke-linecap="round" stroke-linejoin="round"><path d="M1.0 1.5 L7.6 8.3 L11.8 3.9 L21.6 12.6"/><path d="M15.2 13.2 H22.6 V5.9"/></g></svg>
<span class="t" style="left:1051.98px;top:1169.13px;font-size:20.40px;line-height:20.40px;color:#efecf9;-webkit-text-stroke:0.3px;">1</span>
<div class="b bar" style="left:1085.4px;top:1166.60px;width:498.6px;height:24.6px"><i style="left:0.0px;width:16.0px;background:#fab9ac"></i><i style="left:15.6px;width:145.4px;background:#e9e8ed"></i><i style="left:160.6px;width:290.4px;background:#8fe3d2"></i><i style="left:450.6px;width:48.4px;background:#1cc5a7"></i></div>
<div class="b" style="left:1710.60px;top:1179.64px;width:15.60px;height:2.20px;background:#7a739f;"></div>
<span class="t" style="left:354.20px;top:1222.49px;font-size:20.40px;line-height:20.40px;color:#f2f0fb;-webkit-text-stroke:0.3px;transform:scaleX(0.9078);">Release Process</span>
<span class="t" style="left:705.00px;top:1222.49px;font-size:20.40px;line-height:20.40px;color:#efecf9;-webkit-text-stroke:0.3px;transform:scaleX(0.9099);">#12</span>
<div class="b" style="left:800.20px;top:1216.36px;width:31.80px;height:31.80px;background:#48dac4;border-radius:5px;"></div>
<span class="t" style="left:805.73px;top:1224.05px;font-size:18.80px;line-height:18.80px;color:#141033;-webkit-text-stroke:0.3px;">77</span>
<span class="t" style="left:867.17px;top:1222.49px;font-size:20.40px;line-height:20.40px;color:#e9e6f6;-webkit-text-stroke:0.3px;transform:scaleX(0.9835);">-8</span>
<svg class="b" style="left:891.23px;top:1224.96px;" width="25.00" height="14.60" viewBox="0 0 24 14.6"><g fill="none" stroke="#f17f68" stroke-width="2.5" stroke-linecap="round" stroke-linejoin="round"><path d="M1.0 1.5 L7.6 8.3 L11.8 3.9 L21.6 12.6"/><path d="M15.2 13.2 H22.6 V5.9"/></g></svg>
<span class="t" style="left:1051.98px;top:1222.49px;font-size:20.40px;line-height:20.40px;color:#efecf9;-webkit-text-stroke:0.3px;">1</span>
<div class="b bar" style="left:1085.4px;top:1219.96px;width:498.6px;height:24.6px"><i style="left:0.0px;width:16.0px;background:#f4775a"></i><i style="left:15.6px;width:81.0px;background:#e9e8ed"></i><i style="left:96.2px;width:226.2px;background:#8fe3d2"></i><i style="left:322.0px;width:177.0px;background:#1cc5a7"></i></div>
<div class="b" style="left:1710.60px;top:1233.00px;width:15.60px;height:2.20px;background:#7a739f;"></div>
<span class="t" style="left:2021.30px;top:111.87px;font-size:25.20px;line-height:25.20px;color:#f4f2fc;font-weight:700;transform:scaleX(0.9411);">Action Items</span>
<div class="b" style="left:2174.70px;top:107.90px;width:76.40px;height:32.20px;background:#364f00;border-radius:16.1px;"></div>
<span class="t" style="left:2186.60px;top:116.04px;font-size:17.20px;line-height:17.20px;color:#b9e532;-webkit-text-stroke:0.3px;transform:scaleX(0.9270);">ALPHA</span>
<svg class="b" style="left:2021.20px;top:180.20px;" width="26.60" height="26.60" viewBox="0 0 24 24"><path d="M12.00 2.40 L15.23 8.35 L21.89 9.59 L17.23 14.50 L18.11 21.21 L12.00 18.30 L5.89 21.21 L6.77 14.50 L2.11 9.59 L8.77 8.35Z" fill="#f0b913" stroke="#f0b913" stroke-width="3.4" stroke-linejoin="round"/></svg>
<span class="t" style="left:2054.20px;top:182.97px;font-size:22.60px;line-height:22.60px;color:#f4f2fc;font-weight:700;transform:scaleX(0.8991);">Tools &amp; Envs</span>
<div class="b" style="left:2187.60px;top:179.00px;width:28.80px;height:28.80px;background:#282350;border-radius:14.4px;"></div>
<span class="t" style="left:2197.50px;top:185.39px;font-size:16.20px;line-height:16.20px;color:#8a85ab;-webkit-text-stroke:0.3px;">3</span>
<svg class="b" style="left:2504.80px;top:182.00px;" width="24.00" height="23.00" viewBox="0 0 24 23"><g fill="none" stroke="#a59fc9" stroke-width="1.9" stroke-linejoin="round"><rect x="-12.4" y="-2.5" width="24.8" height="5.0" rx="1.9" transform="translate(12.6,11.7) rotate(-42)"/><line x1="14.2" y1="6.8" x2="17.6" y2="10.6"/></g><path fill="#a59fc9" d="M4.20 2.00 L5.33 5.07 L8.40 6.20 L5.33 7.33 L4.20 10.40 L3.07 7.33 L0.00 6.20 L3.07 5.07Z"/><path fill="#a59fc9" d="M10.90 0.50 L11.70 2.40 L13.60 3.20 L11.70 4.00 L10.90 5.90 L10.10 4.00 L8.20 3.20 L10.10 2.40Z"/><path fill="#a59fc9" d="M19.20 12.70 L20.33 15.77 L23.40 16.90 L20.33 18.03 L19.20 21.10 L18.07 18.03 L15.00 16.90 L18.07 15.77Z"/></svg>
<div class="b" style="left:2022.80px;top:229.40px;width:24.00px;height:24.00px;background:#1e1944;border-radius:5px;border:1.3px solid #2a2552;box-sizing:border-box;"></div>
<span class="t" style="left:2057.40px;top:231.53px;font-size:20.40px;line-height:20.40px;color:#efedfa;-webkit-text-stroke:0.3px;transform:scaleX(0.9835);">Create office hours with tooling experts</span>
<div class="b" style="left:2022.80px;top:261.40px;width:24.00px;height:24.00px;background:#1e1944;border-radius:5px;border:1.3px solid #2a2552;box-sizing:border-box;"></div>
<span class="t" style="left:2057.40px;top:263.53px;font-size:20.40px;line-height:20.40px;color:#efedfa;-webkit-text-stroke:0.3px;transform:scaleX(0.9754);">Offer training for developer tools and IDEs</span>
<div class="b" style="left:2022.80px;top:293.40px;width:24.00px;height:24.00px;background:#1e1944;border-radius:5px;border:1.3px solid #2a2552;box-sizing:border-box;"></div>
<span class="t" style="left:2057.40px;top:295.53px;font-size:20.40px;line-height:20.40px;color:#efedfa;-webkit-text-stroke:0.3px;transform:scaleX(0.9861);">Determine problems with the specific tools you use</span>
<div class="b" style="left:2022.80px;top:325.40px;width:24.00px;height:24.00px;background:#16103a;border-radius:5px;border:1.3px solid #1c1740;box-sizing:border-box;"></div>
<span class="t" style="left:2057.40px;top:327.53px;font-size:20.40px;line-height:20.40px;color:#5e5987;-webkit-text-stroke:0.3px;transform:scaleX(0.9672);">Create a new action item...</span>
<svg class="b" style="left:2021.20px;top:393.60px;" width="26.60" height="26.60" viewBox="0 0 24 24"><path d="M12.00 2.40 L15.23 8.35 L21.89 9.59 L17.23 14.50 L18.11 21.21 L12.00 18.30 L5.89 21.21 L6.77 14.50 L2.11 9.59 L8.77 8.35Z" fill="#f0b913" stroke="#f0b913" stroke-width="3.4" stroke-linejoin="round"/></svg>
<span class="t" style="left:2054.20px;top:396.37px;font-size:22.60px;line-height:22.60px;color:#f4f2fc;font-weight:700;transform:scaleX(0.9640);">Documentation</span>
<div class="b" style="left:2219.00px;top:392.40px;width:28.80px;height:28.80px;background:#282350;border-radius:14.4px;"></div>
<span class="t" style="left:2228.90px;top:398.79px;font-size:16.20px;line-height:16.20px;color:#8a85ab;-webkit-text-stroke:0.3px;">2</span>
<svg class="b" style="left:2504.80px;top:395.40px;" width="24.00" height="23.00" viewBox="0 0 24 23"><g fill="none" stroke="#a59fc9" stroke-width="1.9" stroke-linejoin="round"><rect x="-12.4" y="-2.5" width="24.8" height="5.0" rx="1.9" transform="translate(12.6,11.7) rotate(-42)"/><line x1="14.2" y1="6.8" x2="17.6" y2="10.6"/></g><path fill="#a59fc9" d="M4.20 2.00 L5.33 5.07 L8.40 6.20 L5.33 7.33 L4.20 10.40 L3.07 7.33 L0.00 6.20 L3.07 5.07Z"/><path fill="#a59fc9" d="M10.90 0.50 L11.70 2.40 L13.60 3.20 L11.70 4.00 L10.90 5.90 L10.10 4.00 L8.20 3.20 L10.10 2.40Z"/><path fill="#a59fc9" d="M19.20 12.70 L20.33 15.77 L23.40 16.90 L20.33 18.03 L19.20 21.10 L18.07 18.03 L15.00 16.90 L18.07 15.77Z"/></svg>
<div class="b" style="left:2022.80px;top:442.80px;width:24.00px;height:24.00px;background:#7c3aed;border-radius:5px;"></div>
<svg class="b" style="left:2022.80px;top:442.80px;" width="24.00" height="24.00" viewBox="0 0 24 24"><path fill="none" stroke="#fff" stroke-width="2.6" stroke-linecap="round" stroke-linejoin="round" d="M6.200 12.600 L10.300 16.600 L17.900 8.200"/></svg>
<span class="t" style="left:2057.40px;top:444.93px;font-size:20.40px;line-height:20.40px;color:#e4e1f2;-webkit-text-stroke:0.3px;transform:scaleX(0.9934);">Establish a central documentation tool</span>
<div class="b" style="left:2056.60px;top:455.40px;width:344.70px;height:1.80px;background:#e4e1f2;"></div>
<div class="b" style="left:2022.80px;top:474.80px;width:24.00px;height:24.00px;background:#1e1944;border-radius:5px;border:1.3px solid #2a2552;box-sizing:border-box;"></div>
<span class="t" style="left:2057.40px;top:476.93px;font-size:20.40px;line-height:20.40px;color:#efedfa;-webkit-text-stroke:0.3px;transform:scaleX(0.9889);">Track documentation contributions from ICs as</span>
<span class="t" style="left:2057.40px;top:508.93px;font-size:20.40px;line-height:20.40px;color:#efedfa;-webkit-text-stroke:0.3px;transform:scaleX(1.0229);">sprint work</span>
<div class="b" style="left:2022.80px;top:538.80px;width:24.00px;height:24.00px;background:#16103a;border-radius:5px;border:1.3px solid #1c1740;box-sizing:border-box;"></div>
<span class="t" style="left:2057.40px;top:540.93px;font-size:20.40px;line-height:20.40px;color:#5e5987;-webkit-text-stroke:0.3px;transform:scaleX(0.9672);">Create a new action item...</span>
<svg class="b" style="left:2021.20px;top:607.00px;" width="26.60" height="26.60" viewBox="0 0 24 24"><path d="M12.00 2.40 L15.23 8.35 L21.89 9.59 L17.23 14.50 L18.11 21.21 L12.00 18.30 L5.89 21.21 L6.77 14.50 L2.11 9.59 L8.77 8.35Z" fill="#f0b913" stroke="#f0b913" stroke-width="3.4" stroke-linejoin="round"/></svg>
<span class="t" style="left:2054.20px;top:609.77px;font-size:22.60px;line-height:22.60px;color:#f4f2fc;font-weight:700;transform:scaleX(0.9509);">Test Automation</span>
<div class="b" style="left:2227.60px;top:605.80px;width:28.80px;height:28.80px;background:#282350;border-radius:14.4px;"></div>
<span class="t" style="left:2237.50px;top:612.19px;font-size:16.20px;line-height:16.20px;color:#8a85ab;-webkit-text-stroke:0.3px;">3</span>
<svg class="b" style="left:2504.80px;top:608.80px;" width="24.00" height="23.00" viewBox="0 0 24 23"><g fill="none" stroke="#a59fc9" stroke-width="1.9" stroke-linejoin="round"><rect x="-12.4" y="-2.5" width="24.8" height="5.0" rx="1.9" transform="translate(12.6,11.7) rotate(-42)"/><line x1="14.2" y1="6.8" x2="17.6" y2="10.6"/></g><path fill="#a59fc9" d="M4.20 2.00 L5.33 5.07 L8.40 6.20 L5.33 7.33 L4.20 10.40 L3.07 7.33 L0.00 6.20 L3.07 5.07Z"/><path fill="#a59fc9" d="M10.90 0.50 L11.70 2.40 L13.60 3.20 L11.70 4.00 L10.90 5.90 L10.10 4.00 L8.20 3.20 L10.10 2.40Z"/><path fill="#a59fc9" d="M19.20 12.70 L20.33 15.77 L23.40 16.90 L20.33 18.03 L19.20 21.10 L18.07 18.03 L15.00 16.90 L18.07 15.77Z"/></svg>
<div class="b" style="left:2022.80px;top:656.20px;width:24.00px;height:24.00px;background:#1e1944;border-radius:5px;border:1.3px solid #2a2552;box-sizing:border-box;"></div>
<span class="t" style="left:2057.40px;top:658.33px;font-size:20.40px;line-height:20.40px;color:#efedfa;-webkit-text-stroke:0.3px;transform:scaleX(0.9866);">Optimize test suite performance</span>
<div class="b" style="left:2022.80px;top:688.20px;width:24.00px;height:24.00px;background:#1e1944;border-radius:5px;border:1.3px solid #2a2552;box-sizing:border-box;"></div>
<span class="t" style="left:2057.40px;top:690.33px;font-size:20.40px;line-height:20.40px;color:#efedfa;-webkit-text-stroke:0.3px;transform:scaleX(0.9665);">Improve test coverage and effectiveness</span>
<div class="b" style="left:2022.80px;top:720.20px;width:24.00px;height:24.00px;background:#1e1944;border-radius:5px;border:1.3px solid #2a2552;box-sizing:border-box;"></div>
<span class="t" style="left:2057.40px;top:722.33px;font-size:20.40px;line-height:20.40px;color:#efedfa;-webkit-text-stroke:0.3px;transform:scaleX(0.9866);">Optimize test suite performance</span>
<div class="b" style="left:2022.80px;top:752.20px;width:24.00px;height:24.00px;background:#16103a;border-radius:5px;border:1.3px solid #1c1740;box-sizing:border-box;"></div>
<span class="t" style="left:2057.40px;top:754.33px;font-size:20.40px;line-height:20.40px;color:#5e5987;-webkit-text-stroke:0.3px;transform:scaleX(0.9672);">Create a new action item...</span>
<svg class="b" style="left:2021.20px;top:820.40px;" width="26.60" height="26.60" viewBox="0 0 24 24"><path d="M12.00 2.40 L15.23 8.35 L21.89 9.59 L17.23 14.50 L18.11 21.21 L12.00 18.30 L5.89 21.21 L6.77 14.50 L2.11 9.59 L8.77 8.35Z" fill="#f0b913" stroke="#f0b913" stroke-width="3.4" stroke-linejoin="round"/></svg>
<span class="t" style="left:2054.20px;top:823.17px;font-size:22.60px;line-height:22.60px;color:#f4f2fc;font-weight:700;transform:scaleX(0.9415);">Clear Direction</span>
<div class="b" style="left:2211.80px;top:819.20px;width:28.80px;height:28.80px;background:#282350;border-radius:14.4px;"></div>
<span class="t" style="left:2221.70px;top:825.59px;font-size:16.20px;line-height:16.20px;color:#8a85ab;-webkit-text-stroke:0.3px;">1</span>
<svg class="b" style="left:2504.80px;top:822.20px;" width="24.00" height="23.00" viewBox="0 0 24 23"><g fill="none" stroke="#a59fc9" stroke-width="1.9" stroke-linejoin="round"><rect x="-12.4" y="-2.5" width="24.8" height="5.0" rx="1.9" transform="translate(12.6,11.7) rotate(-42)"/><line x1="14.2" y1="6.8" x2="17.6" y2="10.6"/></g><path fill="#a59fc9" d="M4.20 2.00 L5.33 5.07 L8.40 6.20 L5.33 7.33 L4.20 10.40 L3.07 7.33 L0.00 6.20 L3.07 5.07Z"/><path fill="#a59fc9" d="M10.90 0.50 L11.70 2.40 L13.60 3.20 L11.70 4.00 L10.90 5.90 L10.10 4.00 L8.20 3.20 L10.10 2.40Z"/><path fill="#a59fc9" d="M19.20 12.70 L20.33 15.77 L23.40 16.90 L20.33 18.03 L19.20 21.10 L18.07 18.03 L15.00 16.90 L18.07 15.77Z"/></svg>
<div class="b" style="left:2022.80px;top:869.60px;width:24.00px;height:24.00px;background:#1e1944;border-radius:5px;border:1.3px solid #2a2552;box-sizing:border-box;"></div>
<span class="t" style="left:2057.40px;top:871.73px;font-size:20.40px;line-height:20.40px;color:#efedfa;-webkit-text-stroke:0.3px;transform:scaleX(0.9696);">Hold monthly Q&amp;A sessions about goals</span>
<div class="b" style="left:2022.80px;top:901.60px;width:24.00px;height:24.00px;background:#16103a;border-radius:5px;border:1.3px solid #1c1740;box-sizing:border-box;"></div>
<span class="t" style="left:2057.40px;top:903.73px;font-size:20.40px;line-height:20.40px;color:#5e5987;-webkit-text-stroke:0.3px;transform:scaleX(0.9672);">Create a new action item...</span>
<svg class="b" style="left:2021.20px;top:969.80px;" width="26.60" height="26.60" viewBox="0 0 24 24"><path d="M12.00 2.40 L15.23 8.35 L21.89 9.59 L17.23 14.50 L18.11 21.21 L12.00 18.30 L5.89 21.21 L6.77 14.50 L2.11 9.59 L8.77 8.35Z" fill="#f0b913" stroke="#f0b913" stroke-width="3.4" stroke-linejoin="round"/></svg>
<span class="t" style="left:2054.20px;top:972.57px;font-size:22.60px;line-height:22.60px;color:#f4f2fc;font-weight:700;transform:scaleX(0.9433);">Codebase Health</span>
<div class="b" style="left:2233.40px;top:968.60px;width:28.80px;height:28.80px;background:#282350;border-radius:14.4px;"></div>
<span class="t" style="left:2243.30px;top:974.99px;font-size:16.20px;line-height:16.20px;color:#8a85ab;-webkit-text-stroke:0.3px;">4</span>
<svg class="b" style="left:2504.80px;top:971.60px;" width="24.00" height="23.00" viewBox="0 0 24 23"><g fill="none" stroke="#a59fc9" stroke-width="1.9" stroke-linejoin="round"><rect x="-12.4" y="-2.5" width="24.8" height="5.0" rx="1.9" transform="translate(12.6,11.7) rotate(-42)"/><line x1="14.2" y1="6.8" x2="17.6" y2="10.6"/></g><path fill="#a59fc9" d="M4.20 2.00 L5.33 5.07 L8.40 6.20 L5.33 7.33 L4.20 10.40 L3.07 7.33 L0.00 6.20 L3.07 5.07Z"/><path fill="#a59fc9" d="M10.90 0.50 L11.70 2.40 L13.60 3.20 L11.70 4.00 L10.90 5.90 L10.10 4.00 L8.20 3.20 L10.10 2.40Z"/><path fill="#a59fc9" d="M19.20 12.70 L20.33 15.77 L23.40 16.90 L20.33 18.03 L19.20 21.10 L18.07 18.03 L15.00 16.90 L18.07 15.77Z"/></svg>
<div class="b" style="left:2022.80px;top:1019.00px;width:24.00px;height:24.00px;background:#1e1944;border-radius:5px;border:1.3px solid #2a2552;box-sizing:border-box;"></div>
<span class="t" style="left:2057.40px;top:1021.13px;font-size:20.40px;line-height:20.40px;color:#efedfa;-webkit-text-stroke:0.3px;transform:scaleX(0.9904);">Hold monthly or quarterly code cleanup events</span>
<div class="b" style="left:2022.80px;top:1051.00px;width:24.00px;height:24.00px;background:#1e1944;border-radius:5px;border:1.3px solid #2a2552;box-sizing:border-box;"></div>
<span class="t" style="left:2057.40px;top:1053.13px;font-size:20.40px;line-height:20.40px;color:#efedfa;-webkit-text-stroke:0.3px;transform:scaleX(0.9729);">Create a checklist of things to look for in code</span>
<span class="t" style="left:2057.40px;top:1085.13px;font-size:20.40px;line-height:20.40px;color:#efedfa;-webkit-text-stroke:0.3px;transform:scaleX(0.9732);">reviews</span>
<div class="b" style="left:2022.80px;top:1115.00px;width:24.00px;height:24.00px;background:#1e1944;border-radius:5px;border:1.3px solid #2a2552;box-sizing:border-box;"></div>
<span class="t" style="left:2057.40px;top:1117.13px;font-size:20.40px;line-height:20.40px;color:#efedfa;-webkit-text-stroke:0.3px;transform:scaleX(0.9904);">Hold monthly or quarterly code cleanup events</span>
<div class="b" style="left:2022.80px;top:1147.00px;width:24.00px;height:24.00px;background:#1e1944;border-radius:5px;border:1.3px solid #2a2552;box-sizing:border-box;"></div>
<span class="t" style="left:2057.40px;top:1149.13px;font-size:20.40px;line-height:20.40px;color:#efedfa;-webkit-text-stroke:0.3px;transform:scaleX(0.9904);">Hold monthly or quarterly code cleanup events</span>
<div class="b" style="left:2022.80px;top:1179.00px;width:24.00px;height:24.00px;background:#16103a;border-radius:5px;border:1.3px solid #1c1740;box-sizing:border-box;"></div>
<span class="t" style="left:2057.40px;top:1181.13px;font-size:20.40px;line-height:20.40px;color:#5e5987;-webkit-text-stroke:0.3px;transform:scaleX(0.9672);">Create a new action item...</span>
</div>
</body></html>
